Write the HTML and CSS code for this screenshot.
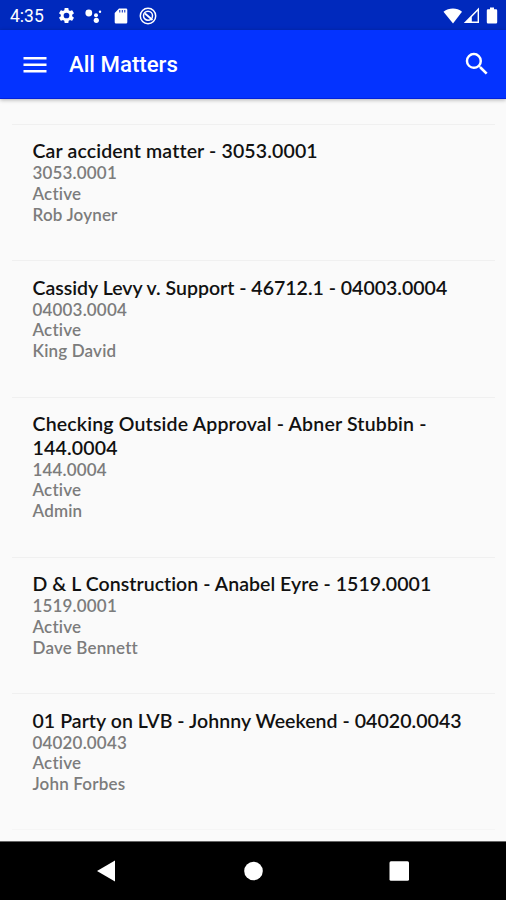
FILE: index.html
```html
<!DOCTYPE html>
<html lang="en">
<head>
    <meta charset="UTF-8">
    <meta name="viewport" content="width=device-width, initial-scale=1.0">
    <title>All Matters</title>
    <link rel="stylesheet" href="styles.css">
</head>
<body>

<div class="status-bar">
    <span class="time">4:35</span>
    <div class="status-left">
        <svg class="gear" width="19" height="19" viewBox="0 0 24 24"><path d="M19.14 12.94c.04-.3.06-.61.06-.94 0-.32-.02-.64-.07-.94l2.03-1.58a.49.49 0 0 0 .12-.61l-1.92-3.32a.488.488 0 0 0-.59-.22l-2.39.96c-.5-.38-1.03-.7-1.62-.94l-.36-2.54a.484.484 0 0 0-.48-.41h-3.84c-.24 0-.43.17-.47.41l-.36 2.54c-.59.24-1.13.57-1.62.94l-2.39-.96c-.22-.08-.47 0-.59.22L2.74 8.87c-.12.21-.08.47.12.61l2.03 1.58c-.05.3-.09.63-.09.94s.02.64.07.94l-2.03 1.58a.49.49 0 0 0-.12.61l1.92 3.32c.12.22.37.29.59.22l2.39-.96c.5.38 1.03.7 1.62.94l.36 2.54c.05.24.24.41.48.41h3.84c.24 0 .44-.17.47-.41l.36-2.54c.59-.24 1.13-.56 1.62-.94l2.39.96c.22.08.47 0 .59-.22l1.92-3.32c.12-.22.07-.47-.12-.61l-2.01-1.58zM12 15.6A3.6 3.6 0 1 1 12 8.4a3.6 3.6 0 0 1 0 7.2z"/></svg>
        <svg class="assistant" width="18" height="18" viewBox="0 0 18 18"><circle cx="3.8" cy="6" r="3.4"/><circle cx="11" cy="8.200" r="2"/><circle cx="11.300" cy="13.300" r="2.600"/><circle cx="15" cy="4.800" r="1.200"/></svg>
        <svg class="sd-card" width="14" height="16" viewBox="0 0 14 16"><path fill-rule="evenodd" d="M5 .5h7a1.3 1.3 0 0 1 1.3 1.3v12.4A1.3 1.3 0 0 1 12 15.500H2A1.300 1.300 0 0 1 .7 14.200V5zM5.300 2v2.500h1V2zm2.500 0v2.500h1V2zm2.500 0v2.500h1V2z"/></svg>
        <svg class="android-q" width="18" height="18" viewBox="0 0 18 18"><g fill="none" stroke="#fff"><circle cx="9" cy="9" r="7.700" stroke-width="1.500"/><circle cx="9" cy="8.700" r="4.500" stroke-width="1.500"/><path d="M6 6.500l7.500 6.500" stroke-width="1.800"/></g></svg>
    </div>
    <div class="status-right">
        <svg class="wifi" width="20" height="16" viewBox="0 0 20 16"><path d="M.5 3.700C6-.5 14-.5 19 3.700L10 15.500z"/></svg>
        <svg class="signal" width="17" height="17" viewBox="0 0 17 17"><path fill-rule="evenodd" d="M16 .5V16H.8zM14.600 4L8.800 10v4.600h5.800z"/></svg>
        <svg class="battery" width="12" height="17" viewBox="0 0 12 17"><path d="M4 .5h4v1.700h2A1.200 1.200 0 0 1 11.200 3.400v11.800A1.200 1.200 0 0 1 10 16.400H2A1.200 1.200 0 0 1 .8 15.200V3.400A1.200 1.200 0 0 1 2 2.200h2z"/></svg>
    </div>
</div>

<header>
    <svg class="menu-icon" width="24" height="16" viewBox="0 0 24 16"><path d="M.5 0h23v2.500H.5zM.5 6.500h23V9H.5zM.5 13h23v2.500H.5z"/></svg>
    <h1>All Matters</h1>
    <svg class="search-icon" width="30" height="30" viewBox="0 0 24 24"><path d="M15.500 14h-.79l-.28-.27A6.471 6.471 0 0 0 16 9.500 6.500 6.500 0 1 0 9.500 16c1.610 0 3.090-.59 4.230-1.570l.27.28v.79l5 4.990L20.490 19l-4.990-5zm-6 0C7.010 14 5 11.990 5 9.500S7.010 5 9.500 5 14 7.010 14 9.500 11.990 14 9.500 14z"/></svg>
</header>

<main>
    <div class="matter">
        <h2>Car accident matter - 3053.0001</h2>
        <p>3053.0001</p>
        <p>Active</p>
        <p>Rob Joyner</p>
    </div>
    <div class="matter">
        <h2>Cassidy Levy v. Support - 46712.1 - 04003.0004</h2>
        <p>04003.0004</p>
        <p>Active</p>
        <p>King David</p>
    </div>
    <div class="matter">
        <h2>Checking Outside Approval - Abner Stubbin - 144.0004</h2>
        <p>144.0004</p>
        <p>Active</p>
        <p>Admin</p>
    </div>
    <div class="matter">
        <h2>D &amp; L Construction - Anabel Eyre - 1519.0001</h2>
        <p>1519.0001</p>
        <p>Active</p>
        <p>Dave Bennett</p>
    </div>
    <div class="matter">
        <h2>01 Party on LVB - Johnny Weekend - 04020.0043</h2>
        <p>04020.0043</p>
        <p>Active</p>
        <p>John Forbes</p>
    </div>
</main>

<nav>
    <svg width="22" height="22" viewBox="0 0 22 22"><path d="M20 .5v21L2 11z"/></svg>
    <svg width="22" height="22" viewBox="0 0 22 22"><circle cx="11.500" cy="11" r="9.300"/></svg>
    <svg width="22" height="22" viewBox="0 0 22 22"><rect x="1.500" y="1.300" width="19.500" height="19.500" rx="1.500"/></svg>
</nav>

</body>
</html>
```
FILE: styles.css
```css
* {
    margin: 0;
    padding: 0;
    box-sizing: border-box;
}

body {
    height: 900px;
    display: flex;
    flex-direction: column;
    background-color: #fafafa;
    font-family: Lato, sans-serif;
    font-variant-ligatures: none;
    overflow: hidden;
}

svg {
    display: block;
    flex-shrink: 0;
    fill: #fff;
}

.status-bar {
    height: 30px;
    flex-shrink: 0;
    display: flex;
    align-items: center;
    padding: 1px 8px 0 10px;
    background-color: #0029bd;
    color: #fff;
}

.time {
    width: 47px;
    font-family: Roboto, sans-serif;
    font-size: 17.5px;
}

.status-left {
    display: flex;
    align-items: center;
}

.assistant {
    margin-left: 9px;
}

.sd-card {
    margin-left: 10.5px;
}

.android-q {
    margin-left: 11px;
}

.status-right {
    display: flex;
    align-items: center;
    margin-left: auto;
}

.battery {
    margin-left: 6px;
}

header {
    position: relative;
    height: 69px;
    flex-shrink: 0;
    display: flex;
    align-items: center;
    padding: 0 14px 0 23px;
    background-color: #0433ff;
    border-bottom: 1px solid #0222dc;
    box-shadow: 0 1px 4px rgba(0, 0, 0, 0.3);
    color: #fff;
}

h1 {
    margin-left: 22px;
    font-family: Roboto, sans-serif;
    font-size: 22.2px;
    font-weight: 500;
}

.menu-icon {
    margin-top: 1px;
}

.search-icon {
    margin-left: auto;
}

main {
    flex: 1;
    padding: 24.5px 11px 0 12px;
}

.matter {
    height: 136.5px;
    padding: 14.5px 21px 0 20.5px;
    border-top: 1px solid #f0f0f0;
}

.matter:nth-child(3) {
    height: 160px;
}

.matter:last-child {
    border-bottom: 1px solid #f5f5f5;
}

h2 {
    margin-bottom: 0.6px;
    font-size: 19.5px;
    font-weight: 600;
    line-height: 23.5px;
    letter-spacing: 0.05px;
    color: #111;
}

.matter:nth-child(1) h2 {
    letter-spacing: 0.14px;
}

.matter:nth-child(2) h2 {
    letter-spacing: 0;
}

.matter:nth-child(3) h2 {
    letter-spacing: 0.18px;
}

p {
    font-size: 17px;
    font-weight: 600;
    line-height: 20.7px;
    letter-spacing: 0.17px;
    color: #7c7c7c;
}

nav {
    height: 59px;
    flex-shrink: 0;
    display: flex;
    align-items: center;
    justify-content: space-between;
    padding: 0 96px 0 95px;
    background-color: #000;
    border-top: 1px solid #666;
}
```
